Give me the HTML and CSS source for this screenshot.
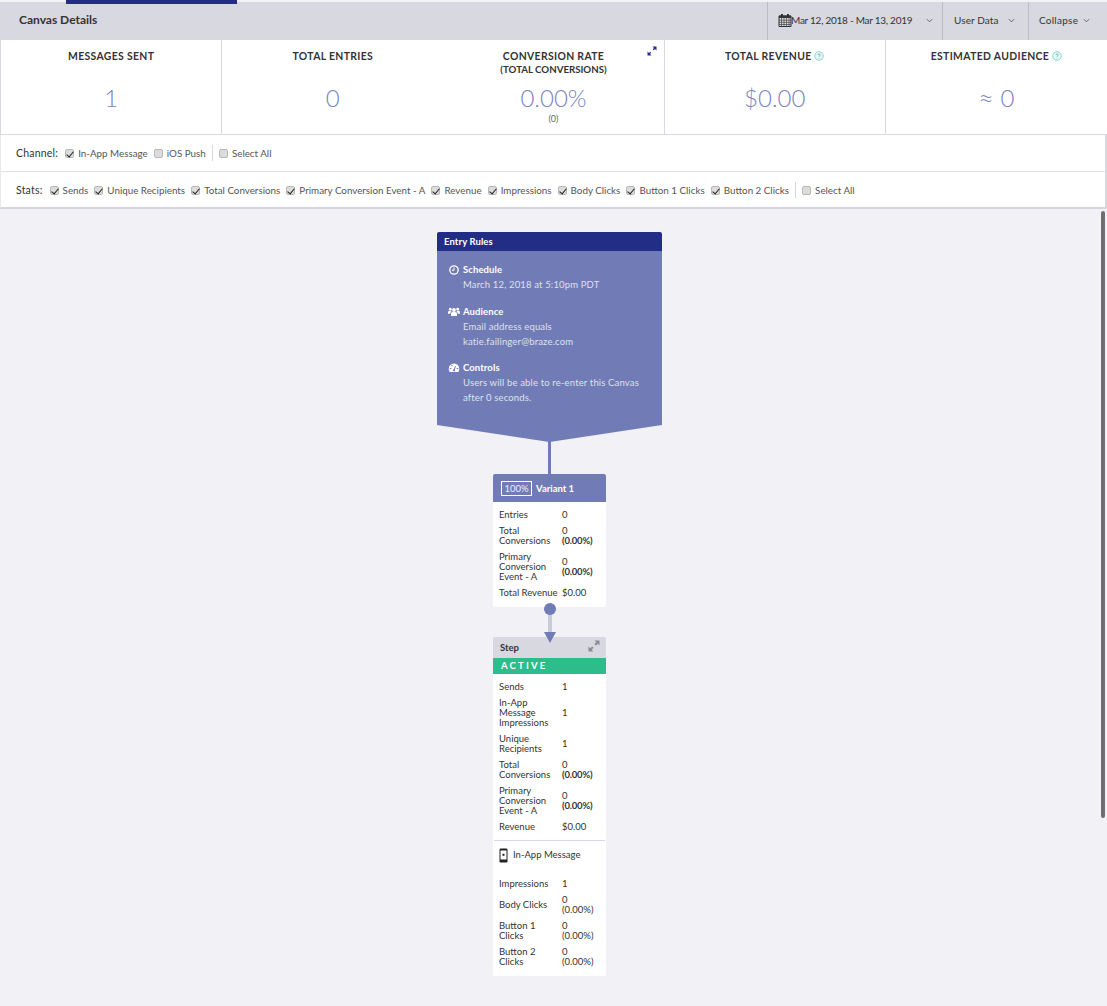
FILE: index.html
```html
<!DOCTYPE html>
<html lang="en">
<head>
<meta charset="utf-8">
<title>Canvas Details</title>
<link rel="stylesheet" href="styles.css">
</head>
<body>
<div class="tab-line"></div>
<header class="topbar">
  <h1 class="page-title">Canvas Details</h1>
  <div class="top-actions">
    <div class="top-btn date-btn">
      <svg class="cal" viewBox="0 0 14 14"><path d="M1 3h12v10.500H1z" fill="none" stroke="#333" stroke-width="1"/><path d="M1 2.500h12V5H1z" fill="#333"/><path d="M3 1h2v3H3zM9 1h2v3H9z" fill="#333"/><path d="M1 7.200h12M1 9.400h12M1 11.500h12M3.500 5v8M6 5v8M8.500 5v8M11 5v8" stroke="#333" stroke-width=".6"/></svg>
      <span class="date-text">Mar 12, 2018 - Mar 13, 2019</span>
      <svg class="chev" viewBox="0 0 8 5"><path d="M1 1l3 3 3-3" fill="none" stroke="#555" stroke-width="1"/></svg>
    </div>
    <div class="top-btn user-btn">
      <span>User Data</span>
      <svg class="chev" viewBox="0 0 8 5"><path d="M1 1l3 3 3-3" fill="none" stroke="#555" stroke-width="1"/></svg>
    </div>
    <div class="top-btn collapse-btn">
      <span>Collapse</span>
      <svg class="chev" viewBox="0 0 8 5"><path d="M1 1l3 3 3-3" fill="none" stroke="#555" stroke-width="1"/></svg>
    </div>
  </div>
</header>

<section class="metrics">
  <div class="metric">
    <div class="metric-title">MESSAGES SENT</div>
    <div class="metric-value">1</div>
  </div>
  <div class="metric no-border">
    <div class="metric-title">TOTAL ENTRIES</div>
    <div class="metric-value">0</div>
  </div>
  <div class="metric conv">
    <svg class="expand-navy" viewBox="0 0 10 10"><path d="M5.500 .5H9.500V4.500L8 3 6.800 4.200 5.800 3.200 7 2zM4.500 9.500H.5V5.500L2 7 3.200 5.800 4.200 6.800 3 8z" fill="#222e85"/></svg>
    <div class="metric-title">CONVERSION RATE</div>
    <div class="metric-sub">(TOTAL CONVERSIONS)</div>
    <div class="metric-value conv-value">0.00%</div>
    <div class="metric-note">(0)</div>
  </div>
  <div class="metric">
    <div class="metric-title">TOTAL REVENUE <svg class="help" viewBox="0 0 10 10"><circle cx="5" cy="5" r="4.300" fill="#e9f8f6" stroke="#6fd0c8" stroke-width=".8"/><path d="M3.900 4c0-1.500 2.300-1.500 2.300 0 0 .9-1.100.9-1.100 1.800M5.100 7v.6" fill="none" stroke="#3aa99c" stroke-width=".7"/></svg></div>
    <div class="metric-value">$0.00</div>
  </div>
  <div class="metric last">
    <div class="metric-title">ESTIMATED AUDIENCE <svg class="help" viewBox="0 0 10 10"><circle cx="5" cy="5" r="4.300" fill="#e9f8f6" stroke="#6fd0c8" stroke-width=".8"/><path d="M3.900 4c0-1.500 2.300-1.500 2.300 0 0 .9-1.100.9-1.100 1.800M5.100 7v.6" fill="none" stroke="#3aa99c" stroke-width=".7"/></svg></div>
    <div class="metric-value"><span class="approx">≈</span> 0</div>
  </div>
</section>

<section class="filters">
  <div class="filter-row">
    <span class="filter-label">Channel:</span>
    <label class="opt"><span class="cb on"></span>In-App Message</label>
    <label class="opt"><span class="cb"></span>iOS Push</label>
    <span class="sep"></span>
    <label class="opt"><span class="cb"></span>Select All</label>
  </div>
  <div class="filter-row stats-row">
    <span class="filter-label">Stats:</span>
    <label class="opt"><span class="cb on"></span>Sends</label>
    <label class="opt"><span class="cb on"></span>Unique Recipients</label>
    <label class="opt"><span class="cb on"></span>Total Conversions</label>
    <label class="opt"><span class="cb on"></span>Primary Conversion Event - A</label>
    <label class="opt"><span class="cb on"></span>Revenue</label>
    <label class="opt"><span class="cb on"></span>Impressions</label>
    <label class="opt"><span class="cb on"></span>Body Clicks</label>
    <label class="opt"><span class="cb on"></span>Button 1 Clicks</label>
    <label class="opt"><span class="cb on"></span>Button 2 Clicks</label>
    <span class="sep"></span>
    <label class="opt"><span class="cb"></span>Select All</label>
  </div>
</section>

<main class="canvas">
  <div class="scroll-thumb"></div>
  <div class="entry">
    <div class="entry-head">Entry Rules</div>
    <div class="entry-body">
      <div class="rule rule-first">
        <svg class="rule-icon" viewBox="0 0 12 12"><circle cx="6" cy="6" r="4.200" fill="none" stroke="#fff" stroke-width="1.300"/><path d="M6 3.500V6.300H4" fill="none" stroke="#fff" stroke-width="1"/></svg>
        <div><div class="rule-title">Schedule</div><div class="rule-text">March 12, 2018 at 5:10pm PDT</div></div>
      </div>
      <div class="rule">
        <svg class="rule-icon" viewBox="0 0 12 12"><circle cx="6" cy="4" r="1.900" fill="#fff"/><circle cx="2.300" cy="3.200" r="1.400" fill="#fff"/><circle cx="9.700" cy="3.200" r="1.400" fill="#fff"/><path d="M3 10V7.500C3 6.500 4 6 6 6s3 .5 3 1.500V10zM0 7.800V6c0-1 .8-1.300 3-1.300L3.500 6C2.500 6.300 2.200 7 2.200 7.800zM12 7.800V6c0-1-.8-1.300-3-1.300L8.500 6c1 .3 1.300 1 1.300 1.800z" fill="#fff"/></svg>
        <div><div class="rule-title">Audience</div><div class="rule-text">Email address equals<br>katie.failinger@braze.com</div></div>
      </div>
      <div class="rule">
        <svg class="rule-icon" viewBox="0 0 12 12"><path d="M6 1.500A5.300 5.300 0 0 0 .7 6.800c0 1.200.4 2.300 1 3.200h8.600c.6-.9 1-2 1-3.200A5.300 5.300 0 0 0 6 1.500z" fill="#fff"/><path d="M6 8.500L7.500 4M3.500 2.800l.8 1.600M1.700 6.500h1.600M8.700 6.500h1.600" stroke="#717bb5" stroke-width="1" fill="none"/><circle cx="6" cy="8.300" r="1.100" fill="#717bb5"/></svg>
        <div><div class="rule-title">Controls</div><div class="rule-text">Users will be able to re-enter this Canvas<br>after 0 seconds.</div></div>
      </div>
    </div>
  </div>
  <div class="link-dark"></div>

  <div class="card variant">
    <div class="variant-head"><span class="pct">100%</span><span class="variant-name">Variant 1</span></div>
    <div class="stats">
      <div class="stat"><span class="k">Entries</span><span class="v">0</span></div>
      <div class="stat"><span class="k">Total Conversions</span><span class="v">0<br><b>(0.00%)</b></span></div>
      <div class="stat"><span class="k">Primary Conversion Event - A</span><span class="v">0<br><b>(0.00%)</b></span></div>
      <div class="stat"><span class="k nowrap">Total Revenue</span><span class="v">$0.00</span></div>
    </div>
  </div>

  <div class="link-light">
    <span class="dot"></span>
    <span class="arrow"></span>
  </div>

  <div class="card step">
    <div class="step-head">
      <span>Step</span>
      <svg class="expand-grey" viewBox="0 0 12 12"><path d="M6.500 .5H11.500V5.500L9.700 3.700 7.800 5.600 6.400 4.200 8.300 2.300zM5.500 11.500H.5V6.500L2.300 8.300 4.200 6.400 5.600 7.800 3.700 9.700z" fill="#8b8b91"/></svg>
    </div>
    <div class="step-status">ACTIVE</div>
    <div class="stats step-stats">
      <div class="stat"><span class="k">Sends</span><span class="v">1</span></div>
      <div class="stat"><span class="k">In-App Message Impressions</span><span class="v">1</span></div>
      <div class="stat"><span class="k">Unique Recipients</span><span class="v">1</span></div>
      <div class="stat"><span class="k">Total Conversions</span><span class="v">0<br><b>(0.00%)</b></span></div>
      <div class="stat"><span class="k">Primary Conversion Event - A</span><span class="v">0<br><b>(0.00%)</b></span></div>
      <div class="stat"><span class="k">Revenue</span><span class="v">$0.00</span></div>
    </div>
    <div class="msg-type">
      <svg class="phone" viewBox="0 0 9 15"><rect x=".5" y=".5" width="8" height="14" rx="1.300" fill="#222"/><rect x="1.500" y="2.500" width="6" height="9" fill="#fff"/><rect x="3.500" y="5.800" width="2" height="2" fill="#222"/></svg>
      <span>In-App Message</span>
    </div>
    <div class="stats msg-stats">
      <div class="stat"><span class="k">Impressions</span><span class="v">1</span></div>
      <div class="stat"><span class="k">Body Clicks</span><span class="v">0<br>(0.00%)</span></div>
      <div class="stat"><span class="k">Button 1 Clicks</span><span class="v">0<br>(0.00%)</span></div>
      <div class="stat"><span class="k">Button 2 Clicks</span><span class="v">0<br>(0.00%)</span></div>
    </div>
  </div>
</main>
</body>
</html>
```
FILE: styles.css
```css
* { box-sizing: border-box; }
html, body { margin: 0; padding: 0; }
body {
  width: 1107px;
  height: 1006px;
  overflow: hidden;
  background: #f1f1f6;
  font-family: Lato, "Open Sans", sans-serif;
  color: #333;
  position: relative;
}
.tab-line {
  position: absolute;
  left: 66px;
  top: 0;
  width: 171px;
  height: 4px;
  background: #222e85;
}
.topbar {
  margin-top: 2px;
  height: 38px;
  background: #d8d8e0;
  display: flex;
  justify-content: space-between;
  align-items: stretch;
}
.page-title {
  margin: 0 0 0 19px;
  font-size: 12px;
  font-weight: 700;
  line-height: 35px;
  color: #333;
}
.top-actions { display: flex; }
.top-btn {
  display: flex;
  align-items: center;
  border-left: 1px solid #bcbcc4;
  padding-bottom: 2px;
  font-size: 10px;
  color: #333;
  letter-spacing: .1px;
}
.date-btn { width: 175px; padding-left: 10px; }
.user-btn { width: 86px; padding-left: 11px; }
.collapse-btn { width: 79px; padding-left: 10px; letter-spacing: .25px; }
.cal { width: 14px; height: 14px; margin-right: -1px; flex: none; }
.date-text { width: 132px; letter-spacing: -.26px; }
.chev { width: 7px; height: 5px; margin-left: 3px; flex: none; }
.user-btn .chev { margin-left: 9px; }
.collapse-btn .chev { margin-left: 5px; }

.metrics {
  display: grid;
  grid-template-columns: repeat(5, 1fr);
  height: 95px;
  background: #fff;
  border-bottom: 1px solid #d8d8e0;
  border-left: 1px solid #d8d8e0;
}
.metric {
  position: relative;
  border-right: 1px solid #d8d8e0;
  text-align: center;
  padding-top: 10px;
}
.metric.no-border, .metric.last { border-right: 0; }
.metric-title {
  font-size: 10.400px;
  line-height: 12px;
  font-weight: 700;
  letter-spacing: .35px;
  color: #333;
}
.metric-sub {
  font-size: 9.700px;
  line-height: 14px;
  font-weight: 700;
  color: #333;
}
.metric-value {
  margin-top: 21px;
  font-size: 24px;
  line-height: 30px;
  font-weight: 300;
  color: #7a84c2;
}
.approx { font-size: 27px; line-height: 20px; vertical-align: -1px; }
.conv-value { margin-top: 7px; }
.metric-note { font-size: 9px; line-height: 12px; color: #666; }
.expand-navy {
  position: absolute;
  right: 7px;
  top: 6px;
  width: 10px;
  height: 10px;
}
.help { width: 10px; height: 10px; vertical-align: -0.5px; }

.filters {
  background: #fff;
  border-right: 2px solid #d8d8e0;
  border-left: 1px solid #e8e8ee;
  border-bottom: 2px solid #d4d4dc;
}
.filter-row {
  height: 36px;
  display: flex;
  align-items: center;
  padding-left: 15px;
  font-size: 9.800px;
  color: #555;
  gap: 6.100px;
}
.stats-row { border-top: 1px solid #e0e0e6; padding-top: 1px; }
.filter-label { color: #333; font-size: 10.500px; margin-right: 1px; letter-spacing: .2px; }
.opt { display: flex; align-items: center; gap: 4px; white-space: nowrap; }
.cb {
  position: relative;
  width: 9px;
  height: 9px;
  border-radius: 2px;
  background: #dcdcdc;
  border: 1px solid #b8b8b8;
  flex: none;
}
.cb.on::after {
  content: "";
  position: absolute;
  left: 2px;
  top: 0;
  width: 3px;
  height: 6px;
  border: solid #222;
  border-width: 0 1.500px 1.500px 0;
  transform: rotate(40deg);
}
.sep { width: 1px; height: 16px; background: #d8d8e0; }

.canvas {
  position: relative;
  height: 797px;
  padding-top: 23px;
  display: flex;
  flex-direction: column;
  align-items: center;
  padding-right: 8px;
}
.scroll-thumb {
  position: absolute;
  right: 2px;
  top: 2px;
  width: 4px;
  height: 607px;
  border-radius: 2px;
  background: #6f6f6f;
}
.entry { width: 225px; flex: none; }
.entry-head {
  height: 19px;
  background: #222e85;
  border-radius: 2px 2px 0 0;
  color: #fff;
  font-size: 9.500px;
  font-weight: 700;
  line-height: 20px;
  padding-left: 7px;
  letter-spacing: .1px;
}
.entry-body {
  height: 191px;
  background: #717bb5;
  clip-path: polygon(0 174px, 0 0, 100% 0, 100% 174px, 50% 100%);
  padding: 12px 0 0 11px;
  display: flex;
  flex-direction: column;
  gap: 12px;
}
.rule { display: flex; gap: 3px; }
.rule-first { margin-bottom: 1px; }
.rule-icon { width: 12px; height: 12px; margin-top: 1px; flex: none; }
.rule-title { color: #fff; font-weight: 700; font-size: 9.500px; line-height: 14px; letter-spacing: .1px; }
.rule-text { color: #dfe1f0; font-size: 9.500px; line-height: 15px; letter-spacing: .15px; }

.link-dark { width: 3px; height: 33px; margin-top: -1px; background: #717bb5; flex: none; }
.card { width: 113px; background: #fff; border-radius: 2px; flex: none; }
.variant-head {
  height: 28px;
  background: #717bb5;
  display: flex;
  align-items: center;
  padding-left: 8px;
  color: #fff;
  font-size: 9.500px;
  border-radius: 2px 2px 0 0;
}
.pct {
  border: 1px solid #fff;
  width: 31px;
  height: 15px;
  line-height: 13px;
  text-align: center;
  margin-right: 4px;
  color: #eef;
}
.variant-name { font-weight: 700; }
.stats { display: flex; flex-direction: column; gap: 6px; padding: 8px 0 9px 6px; }
.stat {
  display: grid;
  grid-template-columns: 63px 1fr;
  align-items: center;
  font-size: 9.500px;
  line-height: 10px;
  color: #333;
}
.k { padding-right: 2px; }
.nowrap { white-space: nowrap; padding-right: 0; }
.v b { font-weight: 700; letter-spacing: -.2px; }
.link-light {
  position: relative;
  width: 4px;
  height: 30px;
  background: #c8cbdc;
  flex: none;
}
.dot {
  position: absolute;
  left: -4px;
  top: -4px;
  width: 12px;
  height: 12px;
  border-radius: 50%;
  background: #717bb5;
}
.arrow {
  position: absolute;
  left: -4px;
  top: 25px;
  width: 0;
  height: 0;
  border-left: 6px solid transparent;
  border-right: 6px solid transparent;
  border-top: 11px solid #717bb5;
  z-index: 2;
}
.step-head {
  height: 21px;
  background: #d8d8e0;
  display: flex;
  align-items: center;
  justify-content: space-between;
  padding: 0 7px;
  font-size: 9.500px;
  font-weight: 700;
  color: #333;
  border-radius: 2px 2px 0 0;
}
.expand-grey { width: 12px; height: 12px; margin-right: -1px; margin-top: -3px; }
.step-status {
  height: 16px;
  background: #2dbd8b;
  color: #fff;
  font-size: 9.500px;
  font-weight: 700;
  line-height: 16px;
  letter-spacing: 2.200px;
  padding-left: 8px;
}
.step-stats { padding-bottom: 8px; }
.msg-type {
  margin: 0 1px;
  border-top: 1px solid #d8d8e0;
  padding: 7px 0 0 5px;
  height: 39px;
  display: flex;
  gap: 5px;
  font-size: 9.500px;
  line-height: 14px;
  color: #333;
}
.phone { width: 9px; height: 15px; flex: none; }
.msg-stats { padding-top: 0; }
```
